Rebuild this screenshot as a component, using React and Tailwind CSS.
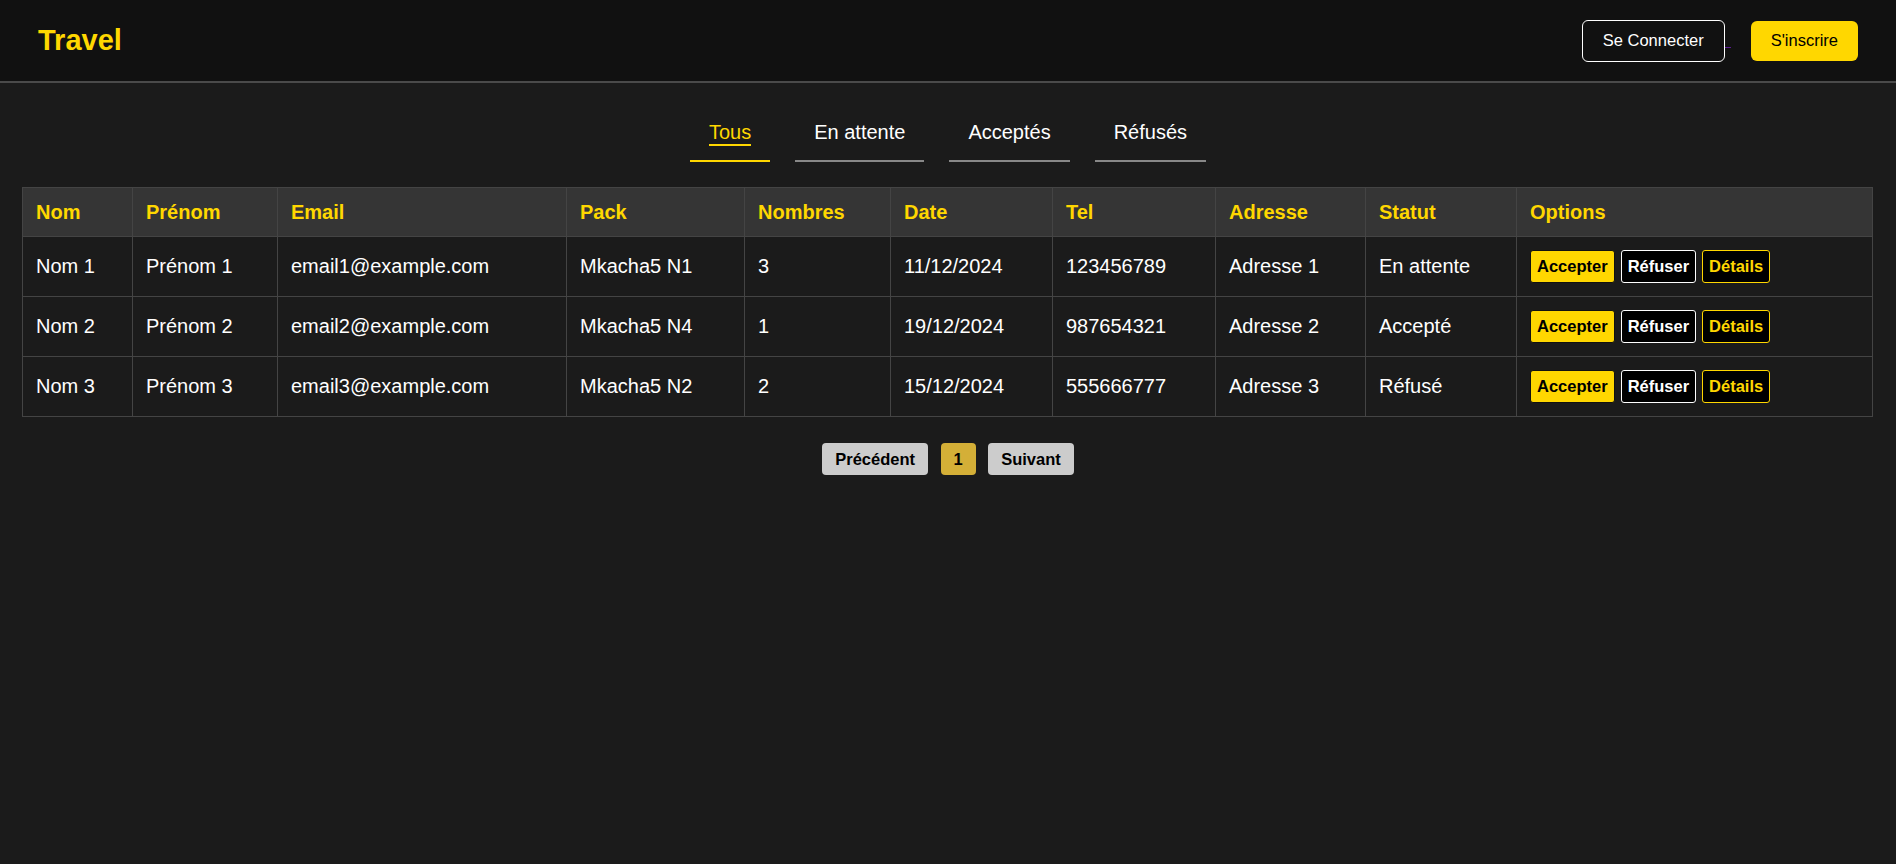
import React, { useState } from 'react';

const rows = [
  { nom: 'Nom 1', prenom: 'Prénom 1', email: 'email1@example.com', pack: 'Mkacha5 N1', nombres: 3, date: '11/12/2024', tel: '123456789', adresse: 'Adresse 1', statut: 'En attente' },
  { nom: 'Nom 2', prenom: 'Prénom 2', email: 'email2@example.com', pack: 'Mkacha5 N4', nombres: 1, date: '19/12/2024', tel: '987654321', adresse: 'Adresse 2', statut: 'Accepté' },
  { nom: 'Nom 3', prenom: 'Prénom 3', email: 'email3@example.com', pack: 'Mkacha5 N2', nombres: 2, date: '15/12/2024', tel: '555666777', adresse: 'Adresse 3', statut: 'Réfusé' },
];

const columns = [
  { label: 'Nom', width: 'w-[110px]' },
  { label: 'Prénom', width: 'w-[145px]' },
  { label: 'Email', width: 'w-[289px]' },
  { label: 'Pack', width: 'w-[178px]' },
  { label: 'Nombres', width: 'w-[146px]' },
  { label: 'Date', width: 'w-[162px]' },
  { label: 'Tel', width: 'w-[163px]' },
  { label: 'Adresse', width: 'w-[150px]' },
  { label: 'Statut', width: 'w-[151px]' },
  { label: 'Options', width: 'w-[356px]' },
];

const tabs = ['Tous', 'En attente', 'Acceptés', 'Réfusés'];

const Navbar = () => (
  <nav className="h-[83px] bg-[#111111] border-b-2 border-[#4a4a4a] flex items-center justify-between px-[38px]">
    <h1 className="text-[29px] font-bold text-[#ffd700] leading-none -mt-[1px]">Travel</h1>
    <div className="flex items-center">
      <button className="h-[42px] px-[20px] border border-white rounded-[6px] text-white text-[16.5px]">
        Se Connecter
      </button>
      {/* souligné du lien visité */}
      <span className="w-[6px] h-px bg-[#5b1d93] mt-[13px]" />
      <button className="ml-[20px] h-[40px] px-[20px] bg-[#ffd700] rounded-[6px] text-black text-[16.5px]">
        S'inscrire
      </button>
    </div>
  </nav>
);

const Tabs = ({ active, onChange }) => (
  <div className="flex justify-center gap-[25px]">
    {tabs.map((tab) => {
      const isActive = tab === active;
      return (
        <button
          key={tab}
          onClick={() => onChange(tab)}
          className={
            'px-[19px] pt-[14px] pb-[14px] border-b-2 text-[20px] ' +
            (isActive ? 'border-[#ffd700] text-[#ffd700]' : 'border-[#888888] text-white')
          }
        >
          <span className={'block leading-[23px] border-b-2 ' + (isActive ? 'border-[#ffd700]' : 'border-transparent')}>
            {tab}
          </span>
        </button>
      );
    })}
  </div>
);

const Actions = () => (
  <div className="flex items-center gap-[6px] text-[16.5px] font-bold leading-[19px]">
    <button className="p-[6px] bg-[#ffd700] text-black border border-[#111] rounded-[3px]">Accepter</button>
    <button className="p-[6px] bg-black text-white border border-white rounded-[3px]">Réfuser</button>
    <button className="p-[6px] bg-black text-[#ffd700] border border-[#ffd700] rounded-[3px]">Détails</button>
  </div>
);

export default function App() {
  const [activeTab, setActiveTab] = useState('Tous');

  return (
    <div className="min-h-[864px] bg-[#1b1b1b] text-white" style={{ fontFamily: '"Liberation Sans", Arial, sans-serif' }}>
      <Navbar />

      <div className="pt-[24px]">
        <Tabs active={activeTab} onChange={setActiveTab} />

        <div className="pl-[22px] pr-[24px] mt-[25px]">
          <table className="w-full table-fixed border-collapse text-[20px]">
            <thead>
              <tr className="bg-[#353535]">
                {columns.map((col) => (
                  <th
                    key={col.label}
                    className={col.width + ' border border-[#444444] px-[13px] py-[12.5px] text-left font-bold text-[#ffd700] leading-[23px]'}
                  >
                    {col.label}
                  </th>
                ))}
              </tr>
            </thead>
            <tbody>
              {rows.map((r) => (
                <tr key={r.nom}>
                  {[r.nom, r.prenom, r.email, r.pack, r.nombres, r.date, r.tel, r.adresse, r.statut].map((v, i) => (
                    <td key={i} className="border border-[#444444] px-[13px] py-[13px] leading-[23px] whitespace-nowrap">
                      {v}
                    </td>
                  ))}
                  <td className="border border-[#444444] px-[13px] py-[13px]">
                    <Actions />
                  </td>
                </tr>
              ))}
            </tbody>
          </table>
        </div>

        <div className="flex justify-center gap-[12.5px] mt-[26px] text-[16.5px] font-bold text-black">
          <button className="h-[32px] px-[13px] bg-[#cccccc] rounded-[4px]">Précédent</button>
          <button className="h-[32px] px-[13px] bg-[#d4af37] rounded-[4px]">1</button>
          <button className="h-[32px] px-[13px] bg-[#cccccc] rounded-[4px]">Suivant</button>
        </div>
      </div>
    </div>
  );
}
